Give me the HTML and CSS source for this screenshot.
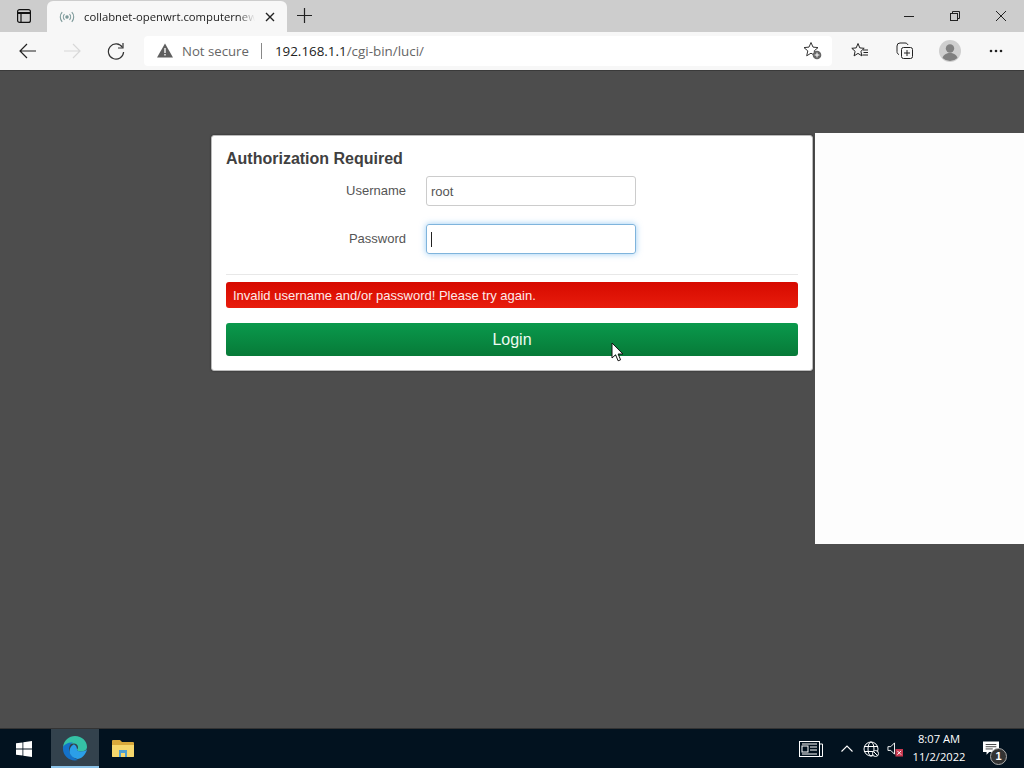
FILE: index.html
```html
<!DOCTYPE html>
<html lang="en">
<head>
    <meta charset="UTF-8">
    <title>collabnet-openwrt.computernew</title>
    <link rel="stylesheet" href="styles.css">
</head>
<body>
    <!-- browser tabs -->
    <div class="tabbar">
        <div class="tab-actions">
            <svg width="16" height="16" viewBox="0 0 16 16" fill="none" stroke="#111" stroke-width="1.2"><rect x="1.6" y="1.6" width="12.8" height="12.8" rx="2"/><path d="M1.6 5h12.8" stroke-width="2"/><path d="M5 5v9.4"/></svg>
        </div>
        <div class="tab">
            <svg class="tab-icon" width="16" height="12" viewBox="0 0 16 12" fill="none" stroke="#7d9a9a" stroke-width="1.1"><circle cx="8" cy="6" r="1.2" fill="#7d9a9a"/><path d="M5.5 3.2a4 4 0 0 0 0 5.6M10.5 3.2a4 4 0 0 1 0 5.6M3.2 1.2a7 7 0 0 0 0 9.6M12.8 1.2a7 7 0 0 1 0 9.6"/></svg>
            <span class="tab-title">collabnet-openwrt.computernew</span>
            <svg class="tab-close" width="10" height="10" viewBox="0 0 10 10" stroke="#222" stroke-width="1.4"><path d="M1 1l8 8M9 1l-8 8"/></svg>
        </div>
        <svg class="new-tab" width="15" height="15" viewBox="0 0 15 15" stroke="#222" stroke-width="1.2"><path d="M7.5 0v15M0 7.5h15"/></svg>
        <div class="window-btns">
            <svg width="46" height="12" viewBox="0 0 46 12" stroke="#222"><path d="M18 6.5h10"/></svg>
            <svg width="46" height="12" viewBox="0 0 46 12" fill="none" stroke="#222"><rect x="18.5" y="3.5" width="7" height="7"/><path d="M20.5 3.5v-2h7v7h-2"/></svg>
            <svg width="46" height="12" viewBox="0 0 46 12" stroke="#222"><path d="M18 1l10 10M28 1l-10 10"/></svg>
        </div>
    </div>

    <!-- address bar -->
    <div class="toolbar">
        <button class="nav-btn">
            <svg width="18" height="16" viewBox="0 0 18 16" fill="none" stroke="#222" stroke-width="1.2"><path d="M1 8h16M8 1L1 8l7 7"/></svg>
        </button>
        <button class="nav-btn">
            <svg width="18" height="16" viewBox="0 0 18 16" fill="none" stroke="#d8d8d8" stroke-width="1.2"><path d="M1 8h16M10 1l7 7-7 7"/></svg>
        </button>
        <button class="nav-btn">
            <svg width="18" height="18" viewBox="0 0 18 18" fill="none" stroke="#333" stroke-width="1.2"><path d="M15.5 5.5A7.6 7.6 0 1 0 16.6 10"/><path d="M16 1v5h-5"/></svg>
        </button>
        <div class="address">
            <svg width="16" height="15" viewBox="0 0 16 15"><path d="M8 .5L16 14.5H0z" fill="#5f5f5f"/><path d="M7.3 5h1.4v5H7.3zM7.3 11h1.4v1.5H7.3z" fill="#f7f7f7"/></svg>
            <span class="not-secure">Not secure</span>
            <span class="addr-sep"></span>
            <span class="url"><b>192.168.1.1</b>/cgi-bin/luci/</span>
            <svg class="addr-star" width="19" height="19" viewBox="0 0 19 19"><path d="M8 1.5l2 4.6 5 .5-3.8 3.3 1.1 4.9L8 12.2l-4.3 2.6 1.1-4.9L1 6.6l5-.5z" fill="none" stroke="#333"/><circle cx="14" cy="14" r="4.3" fill="#666"/><path d="M14 11.6v4.8M11.6 14h4.8" stroke="#fff"/></svg>
        </div>
        <div class="tools">
            <svg width="18" height="18" viewBox="0 0 18 18" fill="none" stroke="#222"><path d="M7 1.5l1.8 4.4 4.4.4-3.3 3 1 4.6L7 11.4l-3.9 2.5 1-4.6-3.3-3 4.4-.4z"/><path d="M12 8h5M12.5 10.5h4.500M11.500 13h5.500" stroke-width="1"/></svg>
            <svg class="tool-collections" width="18" height="18" viewBox="0 0 18 18" fill="none" stroke="#222"><path d="M3 12.500C1.500 12 1 11 1 9.500V4a3 3 0 0 1 3-3h5c1.500 0 2.500.7 3 2"/><rect x="5.500" y="5.500" width="11" height="11" rx="2"/><path d="M11 8v6M8 11h6"/></svg>
            <svg class="tool-profile" width="22" height="22" viewBox="0 0 22 22"><circle cx="11" cy="11" r="11" fill="#cfcfcf"/><circle cx="11" cy="8.500" r="4.200" fill="#808080"/><path d="M3.500 18c1-3.500 4-5 7.500-5s6.500 1.500 7.500 5a11 11 0 0 1-15 0z" fill="#808080"/></svg>
            <svg width="14" height="4" viewBox="0 0 14 4" fill="#222"><circle cx="2" cy="2" r="1.300"/><circle cx="7" cy="2" r="1.300"/><circle cx="12" cy="2" r="1.300"/></svg>
        </div>
    </div>

    <!-- page -->
    <div class="page">
        <form class="login-card" onsubmit="return false">
            <h2>Authorization Required</h2>
            <div class="field">
                <label for="username">Username</label>
                <input type="text" id="username" value="root">
            </div>
            <div class="field">
                <label for="password">Password</label>
                <div class="input-focus" id="password"><span class="caret"></span></div>
            </div>
            <hr>
            <div class="error-msg">Invalid username and/or password! Please try again.</div>
            <button class="login-btn">Login</button>
            <svg class="cursor" width="13" height="20" viewBox="0 0 13 20"><path d="M1 1v15l3.600-3.200 2.500 6 2.500-1-2.500-5.800h4.800z" fill="#fff" stroke="#111"/></svg>
        </form>
        <div class="side-panel"></div>
    </div>

    <!-- windows taskbar -->
    <div class="taskbar">
        <div class="task-item">
            <svg width="16" height="16" viewBox="0 0 16 16" fill="#fff"><path d="M0 2.300l6.500-.9v6.200H0zM7.300 1.300L16 0v7.600H7.300zM0 8.400h6.500v6.200L0 13.700zM7.300 8.400H16V16l-8.700-1.300z"/></svg>
        </div>
        <div class="task-item active">
            <svg width="26" height="26" viewBox="0 0 26 26"><path d="M1 12C2 5 7 1 13 1c7 0 12 5 12 11 0 3-3 4.500-6 4.500-2.500 0-4-1-4-2 2-1.500 1-6-3-6-5 0-8 2-11 3.500z" fill="#35c1a5"/><path d="M1 12c2-3.500 6-5 10-4.500-4 2-5 7-3 11 1.500 3 4.500 5 8 6.500C8 27 0 21 1 12z" fill="#1472c9"/><path d="M15 14.500c0 1 1.500 2 4 2 2.500 0 5-.7 6-2.500-1 6-6 10-9.500 10-4-1-7-3-8-7 0-3 1-6 4-7.500 2 0 3.500 2.500 3.500 5z" fill="#2b9fe8"/></svg>
        </div>
        <div class="task-item">
            <svg width="24" height="20" viewBox="0 1 24 20"><path d="M1 3a1 1 0 0 1 1-1h7l2 2h11a1 1 0 0 1 1 1v13a1 1 0 0 1-1 1H2a1 1 0 0 1-1-1z" fill="#d9a93b"/><path d="M1 7h22v11a1 1 0 0 1-1 1H2a1 1 0 0 1-1-1z" fill="#f6d76c"/><path d="M8 12h8v7h-2v-4h-4v4H8z" fill="#4f9fd0"/></svg>
        </div>
        <div class="tray">
            <svg width="24" height="16" viewBox="0 0 24 16" fill="none" stroke="#fff"><rect x=".5" y=".5" width="20" height="15"/><path d="M20.500 3h3v12.500h-3"/><rect x="3" y="5" width="6" height="6"/><path d="M3 3h15M11 6h7M11 9h7M3 13h15"/></svg>
            <svg class="tray-up" width="12" height="7" viewBox="0 0 12 7" fill="none" stroke="#fff" stroke-width="1.1"><path d="M.5 6.500L6 1l5.500 5.500"/></svg>
            <svg class="tray-globe" width="16" height="16" viewBox="0 0 16 16" fill="none" stroke="#fff"><circle cx="8" cy="8" r="7"/><ellipse cx="8" cy="8" rx="3" ry="7"/><path d="M1 5.500h14M1 10.500h14"/><circle cx="12.500" cy="12.500" r="3" fill="#02121f"/><path d="M10.500 10.500l4 4"/></svg>
            <svg class="tray-vol" width="16" height="16" viewBox="0 0 17 16"><path d="M1 5.500h3l4-4v12l-4-4H1z" fill="none" stroke="#fff"/><rect x="9" y="8" width="8" height="8" fill="#c8384f"/><path d="M11 10l4 4M15 10l-4 4" stroke="#fff"/></svg>
            <div class="clock">
                <div>8:07 AM</div>
                <div>11/2/2022</div>
            </div>
            <div class="notify">
                <svg width="16" height="15" viewBox="0 0 18 16"><path d="M0 0h18v12H7l-3 3v-3H0z" fill="#fff"/><path d="M3 3.500h12M3 6h12M3 8.500h8" stroke="#333"/></svg>
                <span class="notify-count">1</span>
            </div>
        </div>
    </div>
</body>
</html>
```

FILE: styles.css
```css
* {
    box-sizing: border-box;
}
body {
    margin: 0;
    height: 768px;
    overflow: hidden;
    display: flex;
    flex-direction: column;
    font-family: "Liberation Sans", Arial, sans-serif;
    background-color: #4d4d4d;
}

/* Browser tabs */
.tabbar {
    height: 32px;
    display: flex;
    align-items: flex-end;
    background-color: #cdcdcd;
    flex-shrink: 0;
}
.tab-actions {
    width: 47px;
    height: 32px;
    display: flex;
    align-items: center;
    justify-content: center;
}
.tab {
    width: 240px;
    height: 31px;
    padding: 0 12px;
    display: flex;
    align-items: center;
    background-color: #f7f7f7;
    border-radius: 6px 6px 0 0;
}
.tab-icon {
    flex-shrink: 0;
}
.tab-title {
    flex: 1;
    min-width: 0;
    margin-left: 9px;
    font-family: "Open Sans", sans-serif;
    font-size: 11.3px;
    color: #222;
    white-space: nowrap;
    -webkit-mask-image: linear-gradient(to right, #000 90%, transparent);
    mask-image: linear-gradient(to right, #000 90%, transparent);
}
.tab-close {
    flex-shrink: 0;
    margin-left: 10px;
}
.new-tab {
    margin: 0 0 9px 10px;
}
.window-btns {
    margin-left: auto;
    height: 32px;
    display: flex;
    align-items: center;
}

/* Address bar */
.toolbar {
    height: 39px;
    padding-bottom: 1px;
    display: flex;
    align-items: center;
    background-color: #f7f7f7;
    border-bottom: 1px solid #3a3a3a;
    flex-shrink: 0;
}
.nav-btn {
    width: 44px;
    height: 30px;
    margin-left: 0;
    padding: 0;
    border: none;
    background: none;
    display: flex;
    align-items: center;
    justify-content: center;
}
.nav-btn:first-child {
    margin-left: 6px;
}
.address {
    width: 688px;
    height: 30px;
    margin-left: 6px;
    padding: 0 10px 0 13px;
    display: flex;
    align-items: center;
    background-color: #fff;
    border-radius: 4px;
}
.not-secure {
    margin-left: 9px;
    font-family: "Open Sans", sans-serif;
    font-size: 13.2px;
    color: #666;
}
.addr-sep {
    width: 1px;
    height: 16px;
    margin: 0 13px 0 12px;
    background-color: #888;
}
.url {
    font-family: "Open Sans", sans-serif;
    font-size: 13.4px;
    color: #666;
}
.url b {
    font-weight: normal;
    color: #222;
}
.addr-star {
    margin-left: auto;
}
.tools {
    flex: 1;
    padding: 0 21px 0 19px;
    display: flex;
    align-items: center;
}
.tool-collections {
    margin-left: 27px;
}
.tool-profile {
    margin-left: 25px;
    margin-right: 28px;
}

/* Page */
.page {
    flex: 1;
    display: flex;
    align-items: flex-start;
    padding-left: 211px;
}
.login-card {
    position: relative;
    width: 602px;
    height: 236px;
    margin-top: 64px;
    padding: 14px 14px 0;
    background-color: #fff;
    border: 1px solid #bbb;
    border-radius: 3px;
    box-shadow: 0 0 2px rgba(0, 0, 0, 0.5);
}
.login-card h2 {
    margin: 0 0 8px;
    font-size: 16px;
    line-height: 18px;
    color: #404040;
}
.field {
    height: 30px;
    margin-bottom: 18px;
    display: flex;
    align-items: center;
}
.field label {
    width: 180px;
    padding-bottom: 2px;
    text-align: right;
    font-size: 13px;
    color: #555;
}
.field input, .input-focus {
    width: 210px;
    height: 30px;
    margin-left: 20px;
    padding: 0 4px;
    border: 1px solid #ccc;
    border-radius: 3px;
    font-family: "Liberation Sans", Arial, sans-serif;
    font-size: 13px;
    color: #555;
}
.input-focus {
    display: flex;
    align-items: center;
    border-color: #7fb4dc;
    box-shadow: 0 0 6px rgba(82, 168, 236, 0.6);
}
.caret {
    width: 1px;
    height: 15px;
    background-color: #222;
}
.login-card hr {
    height: 1px;
    margin: 20px 0 7px;
    border: none;
    background-color: #e8e8e8;
}
.error-msg {
    height: 26px;
    padding-left: 7px;
    line-height: 28px;
    font-size: 13px;
    color: #fdeaea;
    background: linear-gradient(#d60a00, #e81c0c);
    border-radius: 3px;
}
.login-btn {
    display: block;
    width: 100%;
    height: 33px;
    margin-top: 15px;
    padding: 0;
    border: none;
    border-radius: 3px;
    font-family: "Liberation Sans", Arial, sans-serif;
    font-size: 16px;
    color: #eefaf2;
    background: linear-gradient(#0a994c, #077a38);
}
.cursor {
    position: absolute;
    left: 399px;
    top: 206px;
}
.side-panel {
    width: 209px;
    height: 411px;
    margin: 62px 0 0 2px;
    background-color: #fdfdfd;
}

/* Taskbar */
.taskbar {
    height: 40px;
    display: flex;
    background-color: #02121f;
    border-top: 1px solid #333;
    flex-shrink: 0;
}
.task-item {
    width: 48px;
    display: flex;
    align-items: center;
    justify-content: center;
}
.task-item:first-child {
    width: 51px;
    padding-right: 3px;
}
.task-item.active {
    background-color: #33424d;
    border-bottom: 2px solid #8cc4ea;
}
.tray {
    margin-left: auto;
    display: flex;
    align-items: center;
    color: #fff;
}
.tray-up {
    margin-left: 18px;
}
.tray-globe {
    margin-left: 10px;
}
.tray-vol {
    margin-left: 8px;
}
.clock {
    width: 72px;
    padding-bottom: 2px;
    text-align: center;
    font-family: "Open Sans", sans-serif;
    font-size: 11.2px;
    line-height: 18px;
}
.notify {
    position: relative;
    width: 44px;
    height: 32px;
    margin-left: 5px;
    padding: 8px 0 0 3px;
}
.notify-count {
    position: absolute;
    left: 10px;
    top: 15px;
    width: 17px;
    height: 17px;
    border-radius: 50%;
    border: 1px solid #aaa;
    background-color: #333;
    font-size: 11px;
    font-weight: bold;
    line-height: 15px;
    text-align: center;
}
```
